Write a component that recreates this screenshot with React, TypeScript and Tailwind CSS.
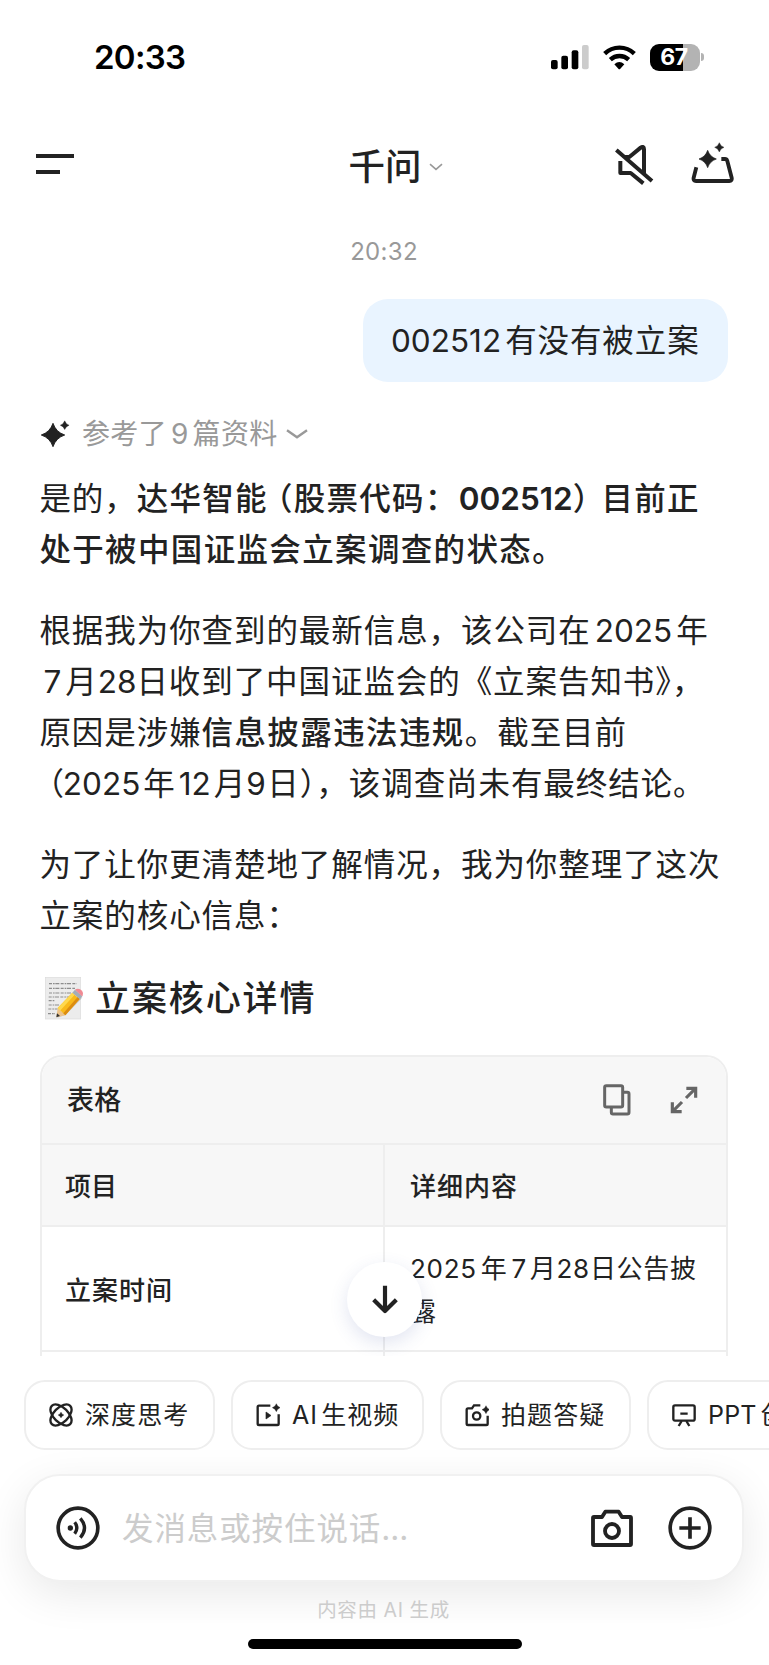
import type { ReactNode } from 'react';
import clsx from 'clsx';

function Sparkle({ cx, cy, r }: { cx: number; cy: number; r: number }) {
  const k = r * 0.25;
  return (
    <path
      fill="currentColor"
      stroke="currentColor"
      strokeWidth={r * 0.08}
      strokeLinejoin="round"
      d={`M${cx} ${cy - r}Q${cx + k} ${cy - k} ${cx + r} ${cy}Q${cx + k} ${cy + k} ${cx} ${cy + r}Q${cx - k} ${cy + k} ${cx - r} ${cy}Q${cx - k} ${cy - k} ${cx} ${cy - r}Z`}
    />
  );
}

function StatusBar() {
  return (
    <div className="flex h-[114px] shrink-0 items-center justify-between pl-[94px] pr-[65px] text-black">
      <span className="text-[33px] font-semibold leading-none tracking-[-0.7px]">20:33</span>
      <div className="flex items-center">
        <svg width="38" height="25" viewBox="0 0 114 75" fill="currentColor">
          <rect x="0" y="45" width="20" height="28" rx="6" />
          <rect x="31" y="32" width="20" height="41" rx="6" />
          <rect x="62" y="16" width="20" height="57" rx="6" />
          <rect x="93" y="0" width="20" height="73" rx="6" fill="#cccccc" />
        </svg>
        <svg className="ml-[14px]" width="33" height="25" viewBox="0 0 99 75">
          <g fill="none" stroke="currentColor" strokeWidth="13">
            <path d="M5 26A64 64 0 0 1 94 26" />
            <path d="M22 44A40 40 0 0 1 77 44" />
          </g>
          <path fill="currentColor" d="M34 58Q49 44 64 58L52 71Q49 75 46 71Z" />
        </svg>
        <div className="ml-[14px] flex h-[27px] w-[50px] items-center justify-center rounded-[9px] bg-[linear-gradient(90deg,#000_66%,#b3b3b3_66%)] pr-[2px] text-[23px] font-bold leading-none tracking-[-0.3px] text-white">
          67
        </div>
        <div className="ml-[1px] h-[8px] w-[3px] rounded-r-full bg-[#b3b3b3]" />
      </div>
    </div>
  );
}

function NavBar() {
  return (
    <div className="flex h-[106px] shrink-0 items-center justify-between pl-9 pr-[35px]">
      <div className="flex w-[120px] flex-col gap-[12px] pb-[6px]">
        <div className="h-[4px] w-[38px] bg-[#222]" />
        <div className="h-[4px] w-[24px] bg-[#222]" />
      </div>
      <div className="flex items-center pl-[21px]">
        <span className="text-[36.5px] font-medium leading-none">千问</span>
        <svg className="ml-[7px]" width="14" height="8" viewBox="0 0 14 8" fill="none" stroke="#999" strokeWidth="1.6">
          <path d="M1 1.2L7 6.4L13 1.2" />
        </svg>
      </div>
      <div className="flex items-center gap-[37px] pb-[9px]">
        <svg className="mt-[5px]" width="40" height="40" viewBox="0 0 120 120" fill="none" stroke="currentColor" strokeWidth="12">
          <path d="M7 15L114 108M29 36H46L80 8Q90 2 90 13V88M19 48V84H50L88 115" strokeLinejoin="round" />
        </svg>
        <svg width="43" height="42" viewBox="0 0 129 126" fill="none" stroke="currentColor" strokeWidth="11.5">
          <path d="M16 76L8 107Q6 117 15 117H115Q124 117 122 107L109 57Q107 51 102 51H91" />
          <Sparkle cx={50} cy={51} r={26} />
          <Sparkle cx={85} cy={16} r={14} />
        </svg>
      </div>
    </div>
  );
}

function Num({ children, className }: { children: ReactNode; className?: string }) {
  return <span className={clsx('tracking-[0px]', className)}>{children}</span>;
}

function Line({ children, className }: { children: ReactNode; className?: string }) {
  return <div className={clsx('h-[51px] whitespace-nowrap', className)}>{children}</div>;
}

function MemoIcon() {
  return (
    <svg width="39" height="43" viewBox="0 0 117 129">
      <rect x="1" y="1" width="106" height="125" fill="#ececec" stroke="#dcdcdc" strokeWidth="2" />
      <g stroke="#8d8d8d" strokeWidth="3.5" strokeDasharray="9 3 5 2 12 4" fill="none">
        <path d="M12 20H95M12 34H90M12 48H82M11 60H72M11 71H30M11 84H44M10 96H38M9 110H30" />
      </g>
      <path d="M36 122L52 103L106 54L112 62L62 114Z" fill="#00000028" />
      <path d="M34 121L38 93L61 115Z" fill="#edc48b" />
      <path d="M34 121L36 109L45 117Z" fill="#333" />
      <path d="M38 93L82 47L104 66L61 115Z" fill="#f9b91a" />
      <path d="M38 93L82 47L89 53L45 101Z" fill="#ffd84c" />
      <path d="M55 109L98 60L104 66L61 115Z" fill="#dc8c10" />
      <path d="M82 47L90 38L112 58L104 66Z" fill="#a3adb8" />
      <path d="M90 38L94 36Q103 33 111 41Q117 49 113 56L111 58Z" fill="#f08a93" />
    </svg>
  );
}

function InfoTable() {
  return (
    <div className="relative h-[302px] overflow-hidden">
      <div className="h-[340px] overflow-hidden rounded-[22px] border-2 border-[#eeeeee]">
        <div className="flex h-[88px] items-center justify-between border-b-2 border-[#eeeeee] bg-[#f7f7f7] pl-[25px] pr-[28px]">
          <span className="pt-[2px] text-[27px] font-medium tracking-[0.3px]">表格</span>
          <div className="flex items-center gap-[39px] text-[#666]">
            <svg width="28" height="32" viewBox="0 0 84 96" fill="none" stroke="currentColor" strokeWidth="9" strokeLinejoin="round">
              <rect x="5" y="5" width="54" height="64" rx="5" />
              <path d="M60 25H73Q78 25 78 30V85Q78 90 73 90H30Q25 90 25 85V70" />
            </svg>
            <svg width="28" height="28" viewBox="0 0 84 84" fill="none" stroke="currentColor" strokeWidth="9.5">
              <path d="M49 7H77V35M76 8L48 36M7 49V77H35M8 76L36 48" />
            </svg>
          </div>
        </div>
        <div className="grid h-[82px] grid-cols-2 border-b-2 border-[#eeeeee] bg-[#f7f7f7] text-[26px] font-medium">
          <div className="-mr-px flex items-center border-r-2 border-[#eeeeee] pl-[23px] pt-[2px]">项目</div>
          <div className="flex items-center pl-[26px] pt-[2px] tracking-[1px]">详细内容</div>
        </div>
        <div className="grid h-[125px] grid-cols-2 border-b-2 border-[#eeeeee] text-[26px]">
          <div className="-mr-px flex items-center border-r-2 border-[#eeeeee] pl-[23px] pt-[3px] font-medium tracking-[1px]">
            立案时间
          </div>
          <div className="flex flex-col justify-center whitespace-nowrap pl-[26px] pt-[2px] leading-[43px] tracking-[0.7px]">
            <div>
              <span>2025</span>
              <span className="ml-[4px]">年</span>
              <span className="ml-[4px]">7</span>
              <span className="ml-[3px]">月</span>28日公告披
            </div>
            <div>露</div>
          </div>
        </div>
        <div className="grid h-[60px] grid-cols-2">
          <div className="-mr-px border-r-2 border-[#eeeeee]" />
        </div>
      </div>
      <button className="absolute left-[307px] top-[207px] flex size-[75px] items-center justify-center rounded-full bg-white shadow-[0_6px_18px_rgba(60,80,160,0.15)]">
        <svg width="26" height="29" viewBox="0 0 78 87" fill="none" stroke="currentColor" strokeWidth="12.5">
          <path d="M39 2V78M5 44L39 78L73 44" strokeLinejoin="round" />
        </svg>
      </button>
    </div>
  );
}

const chips: { label: ReactNode; icon: ReactNode; width: string }[] = [
  {
    label: '深度思考',
    width: 'w-[191px]',
    icon: (
      <>
        <ellipse cx="36" cy="36" rx="39" ry="22" transform="rotate(45 36 36)" />
        <ellipse cx="36" cy="36" rx="39" ry="22" transform="rotate(-45 36 36)" />
        <Sparkle cx={36} cy={36} r={9} />
      </>
    ),
  },
  {
    label: (
      <>
        AI<span className="ml-[3px]">生视频</span>
      </>
    ),
    width: 'w-[193px]',
    icon: (
      <>
        <path d="M43 8H9Q5 8 5 12V62Q5 66 9 66H64Q68 66 68 62V34" />
        <path d="M30 27V48L45 37.5Z" fill="currentColor" strokeWidth="2" />
        <Sparkle cx={61} cy={14} r={12} />
      </>
    ),
  },
  {
    label: '拍题答疑',
    width: 'w-[191px]',
    icon: (
      <>
        <path d="M46 7H27L21 16H9Q5 16 5 20V62Q5 66 9 66H64Q68 66 68 62V38" />
        <circle cx="35" cy="39" r="11" />
        <Sparkle cx={63} cy={20} r={12} />
      </>
    ),
  },
  {
    label: (
      <span className="tracking-[0.2px]">
        PPT<span className="ml-[4px]">创作</span>
      </span>
    ),
    width: 'w-[200px]',
    icon: (
      <>
        <rect x="4" y="7" width="64" height="46" rx="5" />
        <path d="M25 32H47M29 54L20 69M43 54L52 69" />
      </>
    ),
  },
];

function Composer() {
  return (
    <div className="ml-[24px] mr-[25px] mt-[24px] flex h-[108px] shrink-0 items-center rounded-[36px] border-2 border-[#f1f1f1] bg-white pl-[30px] pr-[30px] shadow-[0_12px_44px_rgba(0,0,0,0.09)]">
      <svg width="44" height="44" viewBox="0 0 132 132" fill="none" stroke="currentColor" strokeWidth="11">
        <circle cx="66" cy="66" r="59.5" />
        <circle cx="43" cy="66" r="8" fill="currentColor" stroke="none" />
        <g strokeWidth="10">
          <path d="M56 49Q69 66 56 83" />
          <path d="M73 37Q98 66 73 95" />
        </g>
      </svg>
      <span className="ml-[22px] pt-[2px] text-[31.5px] tracking-[0.9px] text-[#cccccc]">
        发消息或按住说话<span className="tracking-[0px]">...</span>
      </span>
      <div className="ml-auto flex items-center gap-[35px]">
        <svg width="42" height="38" viewBox="0 0 126 114" fill="none" stroke="currentColor" strokeWidth="11.5" strokeLinejoin="round">
          <path d="M33 24L43 8H83L93 24H118Q120 24 120 27V105Q120 108 117 108H9Q6 108 6 105V27Q6 24 9 24Z" />
          <circle cx="63" cy="66" r="21" />
        </svg>
        <svg width="44" height="44" viewBox="0 0 132 132" fill="none" stroke="currentColor" strokeWidth="11">
          <circle cx="66" cy="66" r="59.5" />
          <path d="M66 34V98M34 66H98" />
        </svg>
      </div>
    </div>
  );
}

export default function App() {
  return (
    <div className="flex h-[1665px] w-[769px] flex-col overflow-hidden bg-white font-['Inter','Noto_Sans_CJK_SC',sans-serif] text-[#222]">
      <StatusBar />
      <NavBar />

      {/* Conversation */}
      <div className="flex h-[1136px] shrink-0 flex-col overflow-hidden pl-10 pr-[41px]">
        <div className="mt-[17px] flex h-[30px] items-center justify-center text-[24px] tracking-[0.3px] text-[#999]">20:32</div>
        <div className="mt-[32px] flex h-[83px] w-[365px] shrink-0 items-center self-end whitespace-nowrap rounded-[25px] bg-[#e9f4ff] pl-[28px] text-[31.5px] tracking-[0.9px]">
          <Num>002512</Num>
          <span className="ml-[4px]">有没有被立案</span>
        </div>

        <div className="mt-[31px] flex h-[42px] shrink-0 items-center">
          <svg width="30" height="30" viewBox="0 0 30 30">
            <Sparkle cx={13} cy={16} r={11.7} />
            <Sparkle cx={24.7} cy={6.2} r={4.4} />
          </svg>
          <span className="ml-[12px] whitespace-nowrap text-[28px] tracking-[0.3px] text-[#999]">
            参考了<span className="mx-[4px]">9</span>篇资料
          </span>
          <svg className="ml-[9px]" width="22" height="10" viewBox="0 0 22 10" fill="none" stroke="#999" strokeWidth="2.4">
            <path d="M1 1.2L11 8.2L21 1.2" />
          </svg>
        </div>

        <div className="-ml-[0.6px] mt-[18px] flex shrink-0 flex-col gap-[30px] text-[31.5px] leading-[51px] tracking-[0.93px]">
          <div>
            <Line>
              是的，
              <b className="font-medium tracking-[1.3px]">
                达华智能<span className="-ml-[7px]">（</span>股票代码：
                <Num className="ml-px font-semibold">002512</Num>
                <span className="-mr-[4px]">）</span>目前正
              </b>
            </Line>
            <Line className="font-medium tracking-[1.35px]">处于被中国证监会立案调查的状态。</Line>
          </div>
          <div>
            <Line>
              根据我为你查到的最新信息，该公司在<Num className="mx-[4px]">2025</Num>年
            </Line>
            <Line>
              <Num className="mx-[4px]">7</Num>月<Num>28</Num>日收到了中国证监会的《立案告知书》，
            </Line>
            <Line>
              原因是涉嫌<b className="font-medium tracking-[1.4px]">信息披露违法违规</b>。截至目前
            </Line>
            <Line>
              <span className="-ml-[7px] -mr-[2px]">（</span>
              <Num className="tracking-[0.3px]">2025</Num>
              <span className="mx-[3px]">年</span>
              <Num className="mr-[3px] tracking-[0.6px]">12</Num>月<Num className="mr-[1.5px]">9</Num>日），该调查尚未有最终结论。
            </Line>
          </div>
          <div>
            <Line>为了让你更清楚地了解情况，我为你整理了这次</Line>
            <Line>立案的核心信息：</Line>
          </div>
        </div>

        <div className="mt-[32px] flex h-[50px] shrink-0 items-center pl-[5px]">
          <MemoIcon />
          <span className="ml-[11px] text-[35px] font-medium leading-none tracking-[1.9px]">立案核心详情</span>
        </div>

        <div className="mt-[32px] shrink-0">
          <InfoTable />
        </div>
      </div>

      {/* Quick actions */}
      <div className="mt-[24px] flex h-[70px] shrink-0 gap-[16px] pl-[24px]">
        {chips.map((chip, i) => (
          <div
            key={i}
            className={clsx(
              'flex shrink-0 items-center whitespace-nowrap rounded-[21px] border-2 border-[#eeeeee] bg-white pl-[23px] text-[25px] tracking-[1.1px]',
              chip.width
            )}
          >
            <svg className="mr-[12px] shrink-0" width="24" height="24" viewBox="0 0 72 72" fill="none" stroke="currentColor" strokeWidth="7">
              {chip.icon}
            </svg>
            <span className="pt-[2px]">{chip.label}</span>
          </div>
        ))}
      </div>

      <Composer />

      <div className="mt-[17px] flex h-[24px] shrink-0 items-center justify-center pr-[2px] text-[19.5px] tracking-[0.6px] text-[#cccccc]">
        内容由 AI 生成
      </div>
      <div className="ml-[247.5px] mt-[16px] h-[10px] w-[274px] shrink-0 rounded-full bg-black" />
    </div>
  );
}
